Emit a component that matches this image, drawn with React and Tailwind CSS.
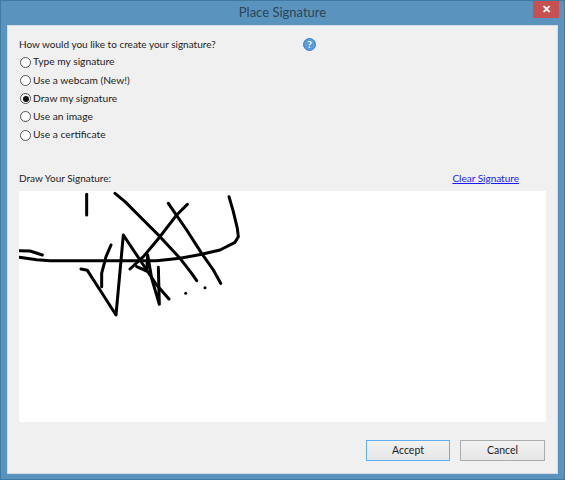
import React from 'react';

const options = [
  { label: 'Type my signature' },
  { label: 'Use a webcam (New!)' },
  { label: 'Draw my signature', checked: true },
  { label: 'Use an image' },
  { label: 'Use a certificate' },
];

// strokes are in 3x picture units, see viewBox on the svg
const strokes = [
  '260,88 260,150',
  '345,85 375,110 430,165 480,215 540,280 575,325 590,347',
  '505,115 560,195 605,265 640,315 662,355',
  '562,118 530,150 480,215 430,275 390,312',
  '687,95 700,140 712,190 715,215 705,232 660,255 605,268 540,280 470,287 300,287 150,287 110,284 58,277',
  '58,257 90,258 127,270',
  '333,240 318,275 305,325 305,365',
  '243,312 262,316 300,375 348,450 370,210 420,285 470,360 507,402',
  '410,305 440,318 443,270 455,340 478,418 475,307',
];

const Radio = ({ label, checked }) => (
  <label className="flex h-[18.25px] items-center gap-[2px] pl-[1px] text-[10.25px]">
    <span className="flex h-[11px] w-[11px] items-center justify-center rounded-full border border-[#555] bg-white">
      {checked && <span className="h-[6px] w-[6px] rounded-full bg-[#111]" />}
    </span>
    <span>{label}</span>
  </label>
);

const HelpIcon = () => (
  <span className="flex h-[13px] w-[13px] items-center justify-center rounded-full border border-[#3f7fc4] bg-[#5b9be0] text-[10px] leading-none font-bold text-white">
    ?
  </span>
);

const SignaturePad = () => (
  <div className="h-[231px] w-[527px] bg-white">
    <svg viewBox="57 78 1581 693" className="h-full w-full">
      {strokes.map((points) => (
        <polyline key={points} points={points} fill="none" stroke="#000" strokeWidth="9" strokeLinejoin="round" strokeLinecap="round" />
      ))}
      <circle cx="557" cy="385" r="4.5" fill="#000" />
      <circle cx="615" cy="368" r="4.5" fill="#000" />
    </svg>
  </div>
);

export default function App() {
  return (
    <div className="relative flex h-[480px] w-[565px] flex-col border border-[#3f7aa3] bg-[#5a93bd] font-['Lato','Open_Sans',sans-serif] text-[10px] text-[#1c1c1c]">
      <div className="flex h-[24px] shrink-0 items-center justify-center text-[13px] text-[#2b4558]">Place Signature</div>
      <button type="button" className="absolute top-0 right-[5px] flex h-[17px] w-[26px] items-center justify-center bg-[#c75050] text-[11px] font-bold text-white">
        ✕
      </button>

      <div className="mx-[6px] mb-[5px] flex flex-1 flex-col border border-[#d5dde3] bg-[#f0f0f0] pt-[10px] pr-[11px] pl-[11px]">
        <div className="flex h-[16px] items-center">
          <span className="w-[284px]">How would you like to create your signature?</span>
          <HelpIcon />
        </div>
        <div className="mt-[1px] flex flex-col">
          {options.map((option) => (
            <Radio key={option.label} label={option.label} checked={option.checked} />
          ))}
        </div>

        <div className="mt-[26px] flex h-[16px] items-center justify-between">
          <span>Draw Your Signature:</span>
          <a href="#clear" className="mr-[27px] text-[#1a1aff] underline">Clear Signature</a>
        </div>
        <div className="mt-[5px]">
          <SignaturePad />
        </div>

        <div className="mt-[18px] flex justify-end gap-[10px] pr-[1px] text-[10.5px]">
          <button type="button" className="h-[21px] w-[84px] border border-[#5fb0ee] bg-linear-to-b from-[#f2f2f2] to-[#e6e6e6]">Accept</button>
          <button type="button" className="h-[21px] w-[85px] border border-[#acacac] bg-linear-to-b from-[#f2f2f2] to-[#e6e6e6]">Cancel</button>
        </div>
      </div>
    </div>
  );
}
